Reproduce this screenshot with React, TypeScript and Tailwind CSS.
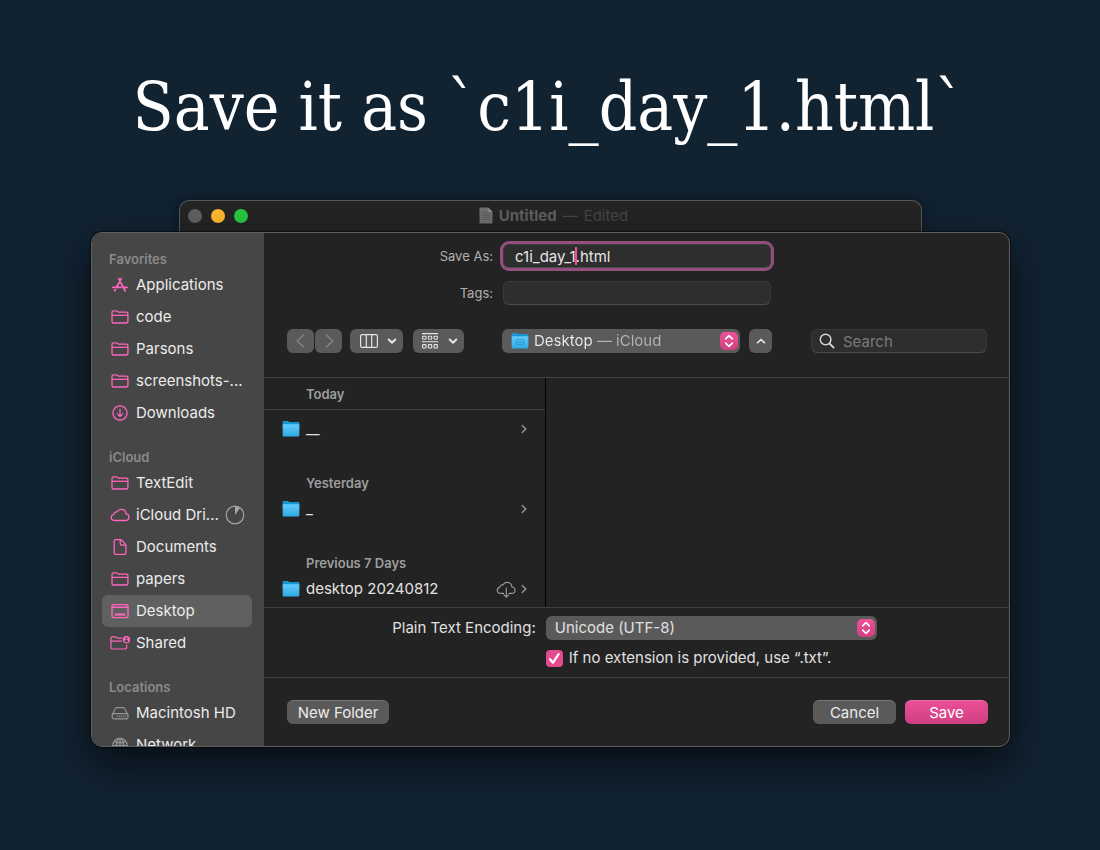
import type { ReactNode } from "react";

const pink = "text-[#ff66bd]";

function FolderIcon() {
  return (
    <svg viewBox="0 0 20 20" className="size-5" fill="none" stroke="currentColor" strokeWidth="1.3" strokeLinejoin="round">
      <path d="M2 14.600V5.200c0-.9.5-1.400 1.400-1.400h2.800c.6 0 .9.2 1.300.5l.5.4c.3.3.6.4 1.100.4h7.400c.9 0 1.400.5 1.400 1.400v8.100c0 .9-.5 1.400-1.400 1.400H3.400c-.9 0-1.400-.5-1.400-1.400Z" />
      <path d="M2 8.300h15.900" />
    </svg>
  );
}

function AppsIcon() {
  return (
    <svg viewBox="0 0 20 20" className="size-5" fill="none" stroke="currentColor" strokeWidth="1.8" strokeLinecap="round">
      <path d="M8.700 3.600 15.200 15.900M11.300 3.600 6.700 12M5.300 14.700l-.6 1.100M2.900 12.300h8.200M14 12.300h3.100" />
    </svg>
  );
}

function DownloadsIcon() {
  return (
    <svg viewBox="0 0 20 20" className="size-5" fill="none" stroke="currentColor" strokeWidth="1.3" strokeLinecap="round" strokeLinejoin="round">
      <circle cx="10" cy="10" r="7.1" />
      <path d="M10 6.4v7M7.3 10.9l2.7 2.6 2.7-2.6" />
    </svg>
  );
}

function CloudIcon() {
  return (
    <svg viewBox="0 0 20 20" className="size-5" fill="none" stroke="currentColor" strokeWidth="1.3" strokeLinejoin="round">
      <path d="M4.7 15.5h10.6a3.3 3.3 0 0 0 .7-6.6C15.800 6.200 13.700 4.300 11.200 4.300c-1.900 0-3.400 1-4.300 2.600-1.600-.3-2.900.8-2.900 2.400C2.300 9.600 1.200 10.800 1.200 12.300c0 1.800 1.500 3.200 3.500 3.200Z" />
    </svg>
  );
}

function DocumentIcon() {
  return (
    <svg viewBox="0 0 20 20" className="size-5" fill="none" stroke="currentColor" strokeWidth="1.3" strokeLinejoin="round">
      <path d="M4.200 16V4c0-.9.500-1.400 1.400-1.400h4.800c.5 0 .8.1 1.100.4l4 4.100c.3.300.4.600.4 1.100V16c0 .900-.500 1.400-1.400 1.400H5.600c-.900 0-1.400-.500-1.400-1.400Z" />
      <path d="M10.300 2.800v4.300c0 .700.400 1.100 1.100 1.100h4.300" />
    </svg>
  );
}

function DesktopIcon() {
  return (
    <svg viewBox="0 0 20 20" className="size-5" fill="none" stroke="currentColor" strokeWidth="1.4">
      <rect x="2" y="3.600" width="16" height="13" rx="1.500" />
      <path d="M2 6.200h16" />
      <rect x="4.800" y="12.400" width="10.400" height="2" rx=".5" fill="currentColor" stroke="none" />
    </svg>
  );
}

function SharedIcon() {
  return (
    <svg viewBox="0 0 20 20" className="size-5" fill="none" stroke="currentColor" strokeWidth="1.2" strokeLinejoin="round">
      <path d="M11.800 5.200H7.900c-.4 0-.7-.1-1-.400l-.6-.500c-.3-.300-.6-.400-1.100-.400H2.300C1.400 3.900.9 4.400.9 5.300v9.300c0 .900.500 1.400 1.400 1.400h12.900c.900 0 1.400-.500 1.400-1.400v-3.200M.9 8.200h10.900" />
      <circle cx="16.400" cy="6.600" r="3.700" fill="currentColor" stroke="none" />
      <circle cx="16.400" cy="5.400" r="1.100" fill="#464646" stroke="none" />
      <path d="M14.300 8.500c.4-1.100 1.200-1.500 2.100-1.500s1.700.4 2.100 1.500c-.6.500-1.300.800-2.100.800s-1.500-.300-2.100-.800Z" fill="#464646" stroke="none" />
    </svg>
  );
}

function DriveIcon() {
  return (
    <svg viewBox="0 0 20 20" className="size-5" fill="none" stroke="currentColor" strokeWidth="1.200" strokeLinejoin="round">
      <rect x="2.200" y="10.600" width="15.800" height="5.300" rx="2" />
      <path d="m2.600 11.500 2.500-5.600c.3-.800.900-1.200 1.700-1.200h6.500c.8 0 1.400.4 1.700 1.200l2.600 5.600" />
      <path d="M7.200 12.300v2M9.200 12.300v2M11.200 12.300v2M13.200 12.300v2M15.200 12.300v2" strokeWidth=".9" />
    </svg>
  );
}

function NetworkIcon() {
  return (
    <svg viewBox="0 0 20 20" className="size-5" fill="none" stroke="currentColor" strokeWidth="1.200">
      <circle cx="10" cy="10.500" r="7.200" />
      <ellipse cx="10" cy="10.500" rx="3.500" ry="7.200" />
      <path d="M10 3.300v14.400M2.800 10.500h14.400M4.200 6.400c3.300 1.700 8.300 1.700 11.600 0" />
    </svg>
  );
}

function BlueFolder({ badge = false }: { badge?: boolean }) {
  return (
    <svg viewBox="0 0 18 18" className="size-[18px] shrink-0">
      <defs>
        <linearGradient id="folder-front" x1="0" y1="0" x2="0" y2="1">
          <stop offset="0" stopColor="#60cbfa" />
          <stop offset="1" stopColor="#2fa9e2" />
        </linearGradient>
      </defs>
      <path d="M.7 1.900c0-.5.300-.8.800-.8h4.300c.4 0 .7.200 1 .500l.5.500h9.200c.5 0 .8.300.8.800V9H.7Z" fill="#1a94d1" />
      <path d="M.7 4.200h16.600v11.500c0 .5-.3.800-.8.800h-15c-.5 0-.8-.3-.8-.8Z" fill="url(#folder-front)" />
      {badge && <rect x="5.300" y="7.800" width="7.400" height="4.600" rx=".8" fill="none" stroke="#1c8fc8" strokeWidth=".8" />}
      {badge && <path d="M6.800 10.300h4.400" stroke="#1c8fc8" strokeWidth=".8" />}
    </svg>
  );
}

function Chevron({ d, className }: { d: string; className: string }) {
  return (
    <svg viewBox="0 0 12 12" className={className} fill="none" stroke="currentColor" strokeLinecap="round" strokeLinejoin="round">
      <path d={d} />
    </svg>
  );
}

function PopupKnob() {
  return (
    <span className="pointer-events-none absolute top-[3px] right-[2px] flex h-[18px] w-[18px] items-center justify-center rounded-[5px] bg-linear-to-b from-[#ee5299] to-[#d03f80] text-white">
      <svg viewBox="0 0 18 18" className="size-[18px]" fill="none" stroke="currentColor" strokeWidth="1.700" strokeLinecap="round" strokeLinejoin="round">
        <path d="m5.700 6.800 3.300-3.200 3.300 3.200M5.700 11.200 9 14.400l3.300-3.200" />
      </svg>
    </span>
  );
}

type Item = { name: string; icon: ReactNode; active?: boolean; progress?: boolean };

const places: { title: string; tint: string; items: Item[] }[] = [
  {
    title: "Favorites",
    tint: pink,
    items: [
      { name: "Applications", icon: <AppsIcon /> },
      { name: "code", icon: <FolderIcon /> },
      { name: "Parsons", icon: <FolderIcon /> },
      { name: "screenshots-...", icon: <FolderIcon /> },
      { name: "Downloads", icon: <DownloadsIcon /> },
    ],
  },
  {
    title: "iCloud",
    tint: pink,
    items: [
      { name: "TextEdit", icon: <FolderIcon /> },
      { name: "iCloud Dri...", icon: <CloudIcon />, progress: true },
      { name: "Documents", icon: <DocumentIcon /> },
      { name: "papers", icon: <FolderIcon /> },
      { name: "Desktop", icon: <DesktopIcon />, active: true },
      { name: "Shared", icon: <SharedIcon /> },
    ],
  },
  {
    title: "Locations",
    tint: "text-[#959595]",
    items: [
      { name: "Macintosh HD", icon: <DriveIcon /> },
      { name: "Network", icon: <NetworkIcon /> },
    ],
  },
];

function Sidebar() {
  return (
    <nav aria-label="Places" className="flex w-[172px] shrink-0 flex-col gap-[18px] overflow-hidden bg-[#464646] pt-4 contain-size">
      {places.map((group) => (
        <section key={group.title} className="shrink-0">
          <h2 className="pl-[17px] text-[13px] leading-5 font-semibold text-[#8a8a8a]">{group.title}</h2>
          <ul className="mr-3 ml-[10px]">
            {group.items.map((item) => (
              <li key={item.name}>
                <a
                  href="#"
                  className={`flex h-8 items-center gap-[6px] rounded-md pl-2 whitespace-nowrap ${item.active ? "bg-[#606060]" : ""}`}
                >
                  <span className={`shrink-0 ${group.tint}`}>{item.icon}</span>
                  <span className="text-[#ececec]">{item.name}</span>
                  {item.progress && (
                    <svg viewBox="0 0 20 20" className="mr-[9px] ml-auto size-5 shrink-0 text-[#a5a5a5]">
                      <circle cx="10" cy="10" r="8.800" fill="none" stroke="currentColor" strokeWidth="1.200" />
                      <path d="M10 10V1.500a8.500 8.500 0 0 1 5 1.700Z" fill="currentColor" />
                    </svg>
                  )}
                </a>
              </li>
            ))}
          </ul>
        </section>
      ))}
    </nav>
  );
}

function FileRow({ name, cloud = false }: { name: string; cloud?: boolean }) {
  return (
    <a href="#" className="flex h-8 items-center pr-[15px] pl-[18px] text-[#e2e2e2]">
      <BlueFolder />
      <span className="ml-[6px] grow">{name}</span>
      {cloud && (
        <svg viewBox="0 0 20 20" className="mr-[2px] size-5 text-[#9b9b9b]" fill="none" stroke="currentColor" strokeWidth="1.100" strokeLinecap="round" strokeLinejoin="round">
          <path d="M7.600 14.400H4.900c-2.100 0-3.700-1.300-3.700-3.100 0-1.500 1-2.600 2.500-2.900.100-1.700 1.500-2.800 3.100-2.500.9-1.600 2.400-2.500 4.200-2.500 2.700 0 4.700 1.900 4.900 4.600 1.900.2 3.100 1.500 3.100 3.200 0 1.800-1.400 3.200-3.400 3.200h-2.500" />
          <path d="M10.300 9v9M7.900 15.800l2.400 2.400 2.400-2.400" />
        </svg>
      )}
      <Chevron d="m4.200 2.500 3.600 3.500-3.600 3.500" className="size-3 stroke-[1.300] text-[#9b9b9b]" />
    </a>
  );
}

const field =
  "h-6 w-full rounded-[6px] border border-[#3a3a3a] border-b-[#4a4a4a] bg-[#2e2e2e] text-[#e6e6e6] outline-none";
const control = "flex h-6 items-center justify-center rounded-[6px] bg-[#5a5a5a]";
const groupTitle = "pl-[42px] text-[13px] font-semibold text-[#9d9d9d]";

export default function App() {
  return (
    <main className="flex min-h-screen flex-col items-center bg-[#112231] pr-4 pl-[17px] font-['Inter','Liberation_Sans',sans-serif] text-[15px] leading-5">
      <h1 className="mt-[62px] pr-1 text-center font-['DejaVu_Serif_Condensed','DejaVu_Serif',serif] text-[67px] leading-[90px] whitespace-nowrap text-white">
        Save it as `c1i_day_1.html`
      </h1>

      <header className="mt-12 flex h-8 w-full max-w-[743px] items-center justify-between rounded-t-[10px] border border-b-0 border-[#585858] bg-[#242424] pb-[2px] pl-2 shadow-[0_0_14px_rgba(0,0,0,0.4)]">
        <div className="flex w-[60px] justify-between">
          <button aria-label="Close" className="size-[14px] rounded-full bg-[#5e605f]" />
          <button aria-label="Minimize" className="size-[14px] rounded-full bg-[#fdb92e]" />
          <button aria-label="Zoom" className="size-[14px] rounded-full bg-[#28c740]" />
        </div>
        <div className="flex items-center gap-[6px]">
          <svg viewBox="0 0 14 17" className="h-[17px] w-[14px]">
            <path d="M.5.500h8.700l4.300 4.300v11.700H.5Z" fill="#6f6f6f" />
            <path d="M9.200.500v4.300h4.300Z" fill="#8d8d8d" />
            <path d="M2.500 4.500h5M2.500 6.500h9M2.500 8.500h9M2.500 10.500h9M2.500 12.500h9" stroke="#5b5b5b" strokeWidth=".8" />
          </svg>
          <span className="font-bold text-[#5e5e5e]">Untitled</span>
          <span className="text-[#4a4a4a]">—</span>
          <span className="text-[#444444]">Edited</span>
        </div>
        <div className="w-[62px]" />
      </header>

      <div
        role="dialog"
        aria-label="Save"
        className="relative flex w-full max-w-[919px] overflow-hidden rounded-[11px] border border-[#606060] bg-[#232323] shadow-[0_0_0_1px_rgba(0,0,0,0.5),0_16px_40px_rgba(0,0,0,0.6)]"
      >
        <Sidebar />

        <div className="min-w-0 grow">
          <div className="border-b border-[#3e3e3e] pt-[11px] pr-[22px] pb-6 pl-[23px]">
            <div className="grid grid-cols-[1fr_268px_1fr] items-center gap-x-[10px] gap-y-[13px]">
              <label htmlFor="save-as" className="text-right text-[13px] text-[#b0b0b0]">
                Save As:
              </label>
              <div className="relative">
                <input id="save-as" defaultValue="c1i_day_1.html" className={`${field} px-[11px] ring-3 ring-[#934e7d]`} />
                <span className="pointer-events-none absolute top-[3px] left-[72px] h-[18px] w-[2px] bg-[#f0509c]" />
              </div>
              <span />
              <label htmlFor="tags" className="text-right text-[13px] text-[#b0b0b0]">
                Tags:
              </label>
              <input id="tags" className={`${field} px-2`} />
            </div>

            <div className="mt-6 grid grid-cols-[1fr_270px_1fr] items-center">
              <div className="flex">
                <button aria-label="Back" className={`${control} w-[27px] text-[#858585]`}>
                  <Chevron d="M8.300.800 2.700 6l5.600 5.200" className="size-[14px] stroke-[1.200]" />
                </button>
                <button aria-label="Forward" className={`${control} ml-px w-[27px] text-[#858585]`}>
                  <Chevron d="M3.700.800 9.300 6l-5.600 5.200" className="size-[14px] stroke-[1.200]" />
                </button>
                <button aria-label="Column view" className={`${control} ml-2 w-[53px] gap-2 pl-1 text-[#e4e4e4]`}>
                  <svg viewBox="0 0 18 14" className="h-[14px] w-[18px]" fill="none" stroke="currentColor" strokeWidth="1.200">
                    <rect x=".6" y=".6" width="16.800" height="12.800" rx="1.500" />
                    <path d="M6.300.600v12.800M11.700.600v12.800" />
                  </svg>
                  <Chevron d="M2.700 4.500 6 7.700l3.300-3.200" className="size-3 stroke-2" />
                </button>
                <button aria-label="Group items" className={`${control} ml-[10px] w-[51px] gap-2 pl-[2px] text-[#e4e4e4]`}>
                  <svg viewBox="0 0 18 16" className="h-4 w-[18px]" fill="none" stroke="currentColor" strokeWidth="1.100">
                    <path d="M1 .6h16M1 8.800h16" />
                    <rect x="1.600" y="3.200" width="3.400" height="3" rx=".6" />
                    <rect x="7.300" y="3.200" width="3.400" height="3" rx=".6" />
                    <rect x="13" y="3.200" width="3.400" height="3" rx=".6" />
                    <rect x="1.600" y="11.600" width="3.400" height="3.400" rx=".6" />
                    <rect x="7.300" y="11.600" width="3.400" height="3.400" rx=".6" />
                    <rect x="13" y="11.600" width="3.400" height="3.400" rx=".6" />
                  </svg>
                  <Chevron d="M2.700 4.500 6 7.700l3.300-3.200" className="size-3 stroke-2" />
                </button>
              </div>

              <div className="flex gap-[9px]">
                <div className="relative flex h-6 grow items-center rounded-[6px] bg-[#5a5a5a] pl-[9px]">
                  <BlueFolder badge />
                  <select
                    aria-label="Where"
                    className="ml-[5px] h-6 grow appearance-none bg-[linear-gradient(90deg,#ececec_60px,#b4b4b4_60px)] bg-clip-text text-transparent outline-none"
                  >
                    <option className="text-black">Desktop — iCloud</option>
                  </select>
                  <PopupKnob />
                </div>
                <button aria-label="Collapse" className={`${control} w-[23px] text-[#e4e4e4]`}>
                  <Chevron d="M2.700 7.700 6 4.500l3.300 3.200" className="size-3 stroke-[1.700]" />
                </button>
              </div>

              <div className="flex justify-end">
                <div className="relative w-44">
                  <svg viewBox="0 0 16 16" className="pointer-events-none absolute top-1 left-2 size-4 text-[#dcdcdc]" fill="none" stroke="currentColor" strokeLinecap="round">
                    <circle cx="6.600" cy="6.600" r="5.300" strokeWidth="1.400" />
                    <path d="m10.600 10.600 4 4" strokeWidth="1.800" />
                  </svg>
                  <input type="search" aria-label="Search" placeholder="Search" className={`${field} pr-2 pl-[31px] placeholder:text-[#7b7b7b]`} />
                </div>
              </div>
            </div>
          </div>

          <div className="flex border-b border-[#3e3e3e]">
            <div className="w-[282px] shrink-0 border-r border-black pb-[2px]">
              <h3 className={`${groupTitle} h-8 border-b border-[#3e3e3e] leading-8`}>Today</h3>
              <div className="flex flex-col gap-7 pt-[3px]">
                <FileRow name="__" />
                <div>
                  <h3 className={groupTitle}>Yesterday</h3>
                  <FileRow name="_" />
                </div>
                <div>
                  <h3 className={groupTitle}>Previous 7 Days</h3>
                  <FileRow name="desktop 20240812" cloud />
                </div>
              </div>
            </div>
          </div>

          <div className="grid grid-cols-[auto_331px] items-center justify-center gap-x-[10px] gap-y-2 border-b border-[#3e3e3e] pt-2 pr-1 pb-[9px] text-[#e0e0e0]">
            <label htmlFor="encoding">Plain Text Encoding:</label>
            <div className="relative">
              <select id="encoding" className="h-6 w-full appearance-none rounded-[6px] bg-[#5a5a5a] px-[9px] outline-none">
                <option>Unicode (UTF-8)</option>
              </select>
              <PopupKnob />
            </div>
            <label className="col-start-2 flex items-center gap-[6px] whitespace-nowrap">
              <span className="relative flex">
                <input type="checkbox" defaultChecked className="size-[17px] appearance-none rounded-[4px] bg-[#56565a] checked:bg-[#e34a90]" />
                <svg viewBox="0 0 17 17" className="pointer-events-none absolute size-[17px] text-white" fill="none" stroke="currentColor" strokeWidth="2.200" strokeLinecap="round" strokeLinejoin="round">
                  <path d="m4 9.200 3 3.500 5.600-8.600" />
                </svg>
              </span>
              If no extension is provided, use “.txt”.
            </label>
          </div>

          <div className="flex gap-[9px] py-[22px] pr-[21px] pl-[23px] text-[#ececec]">
            <button className={`${control} mr-auto w-[102px] border-t border-[#757575]`}>New Folder</button>
            <button className={`${control} w-[83px] border-t border-[#757575]`}>Cancel</button>
            <button className="flex h-6 w-[83px] items-center justify-center rounded-[6px] border-t border-[#f06fab] bg-linear-to-b from-[#ea4f97] to-[#cf4080] text-white">
              Save
            </button>
          </div>
        </div>
      </div>
    </main>
  );
}
